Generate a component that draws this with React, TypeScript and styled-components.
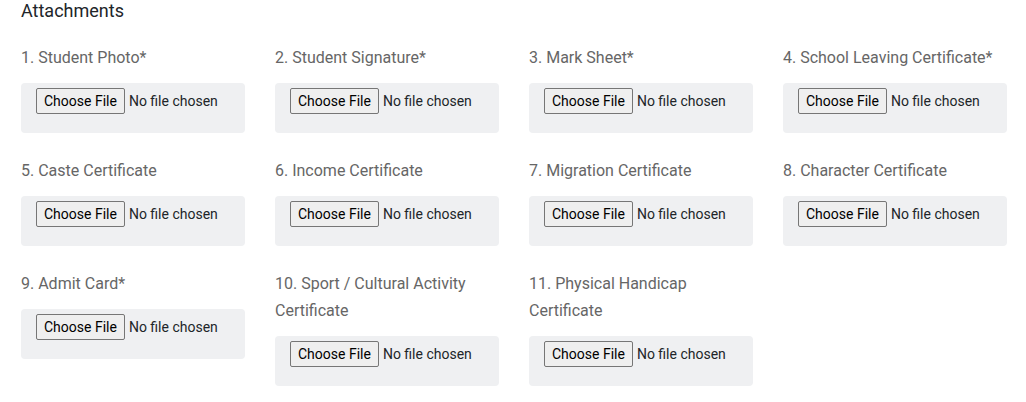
import React from "react";
import styled, { createGlobalStyle } from "styled-components";

const Global = createGlobalStyle`
  html, body { margin: 0; padding: 0; background: #ffffff; }
  body { font-family: Roboto, "Liberation Sans", sans-serif; }
`;

const Page = styled.div`
  padding: 0 21px;
  width: 1016px;
  box-sizing: border-box;
`;

const Heading = styled.h4`
  margin: 0 0 22px 0;
  font-size: 18px;
  font-weight: 400;
  line-height: 22px;
  color: #212529;
`;

const Grid = styled.div`
  display: grid;
  grid-template-columns: repeat(4, 224px);
  column-gap: 30px;
`;

const Group = styled.div`
  margin-bottom: 24px;
`;

const Label = styled.label`
  display: block;
  font-size: 16px;
  line-height: 27px;
  color: #666666;
  margin-bottom: 12px;
`;

const Box = styled.div`
  height: 50px;
  box-sizing: border-box;
  background: #eff0f2;
  border-radius: 4px;
  padding: 5px 15px 0 15px;
`;

const FileInput = styled.input`
  font-family: Roboto, "Liberation Sans", sans-serif;
  font-size: 14px;
  line-height: 26px;
  color: #212529;

  &::file-selector-button {
    font-family: Roboto, "Liberation Sans", sans-serif;
    font-size: 14px;
    height: 26px;
    padding: 0 7px;
    margin-right: 4px;
    background: #efefef;
    border: 1px solid #767676;
    border-radius: 2px;
    color: #000;
  }
`;

const items = [
  "1. Student Photo*",
  "2. Student Signature*",
  "3. Mark Sheet*",
  "4. School Leaving Certificate*",
  "5. Caste Certificate",
  "6. Income Certificate",
  "7. Migration Certificate",
  "8. Character Certificate",
  "9. Admit Card*",
  "10. Sport / Cultural Activity Certificate",
  "11. Physical Handicap Certificate",
];

export default function App() {
  return (
    <Page>
      <Global />
      <Heading>Attachments</Heading>
      <Grid>
        {items.map((t) => (
          <Group key={t}>
            <Label>{t}</Label>
            <Box>
              <FileInput type="file" />
            </Box>
          </Group>
        ))}
      </Grid>
    </Page>
  );
}
